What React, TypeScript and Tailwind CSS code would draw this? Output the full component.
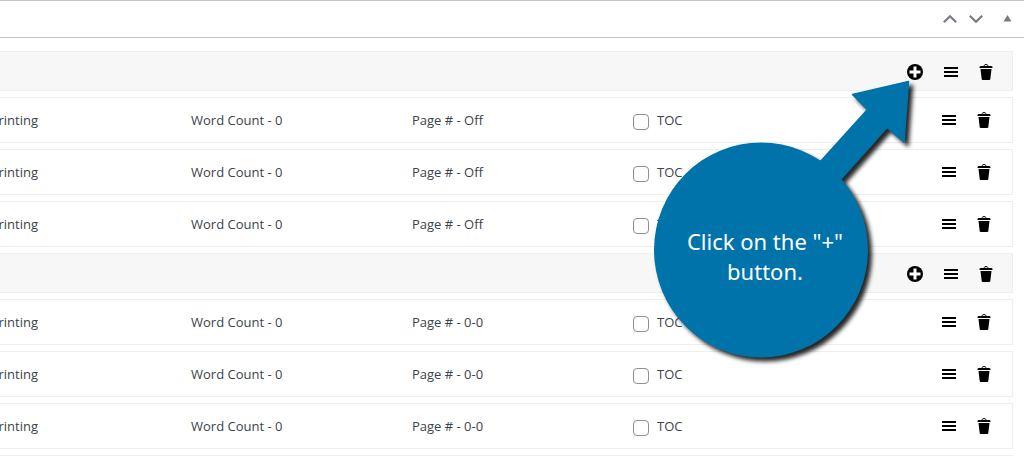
import clsx from "clsx";

type Section = { id: string; page: string };

const sections: Section[] = [
  { id: "front", page: "Page # - Off" },
  { id: "body", page: "Page # - 0-0" },
];

function PlusIcon() {
  return (
    <svg width="16" height="16" viewBox="0 0 16 16" aria-hidden="true">
      <circle cx="8" cy="8" r="8" fill="#000" />
      <path d="M8 2.500v11M2.500 8h11" stroke="#fff" strokeWidth="3" />
    </svg>
  );
}

function MenuIcon() {
  return (
    <svg width="14" height="16" viewBox="0 0 14 16" aria-hidden="true">
      <path d="M0 3h14v2H0zM0 7h14v2H0zM0 11h14v2H0z" />
    </svg>
  );
}

function TrashIcon() {
  return (
    <svg width="14" height="16" viewBox="0 0 14 16" aria-hidden="true">
      <path d="M5 1.800c0-1.700 4-1.700 4 0" fill="none" stroke="#000" strokeWidth="1" />
      <path d="M.5 4V3.200Q.5 2 2 2h10q1.500 0 1.500 1.200V4zM1.500 5h11l-1.200 10q-.1 1-1 1H3.700q-.9 0-1-1z" />
    </svg>
  );
}

function Chevron({ down }: { down?: boolean }) {
  return (
    <svg
      width="14"
      height="10"
      viewBox="0 0 14 10"
      fill="none"
      stroke="#787c82"
      strokeWidth="2.2"
      aria-hidden="true"
      className={clsx(down && "rotate-180")}
    >
      <path d="M.8 8.200 7 2.200l6.200 6" />
    </svg>
  );
}

function Actions({ canAdd }: { canAdd?: boolean }) {
  return (
    <div className={clsx("ml-auto flex items-center", canAdd ? "pt-0.5 pr-[19px]" : "pr-[21px]")}>
      {canAdd && (
        <button type="button" aria-label="Add" className="mr-[21px]">
          <PlusIcon />
        </button>
      )}
      <button type="button" aria-label="Move" className="mr-[21px]">
        <MenuIcon />
      </button>
      <button type="button" aria-label="Delete">
        <TrashIcon />
      </button>
    </div>
  );
}

function Row({ id, page }: { id: string; page: string }) {
  return (
    <li className="flex h-[46px] items-center border border-l-0 border-[#eee] bg-white">
      <div className="w-[191px] shrink-0">
        {/* label runs off the left edge of the panel */}
        <div className="flex w-[38px] justify-end overflow-hidden">Printing</div>
      </div>
      <div className="w-[221px] shrink-0">Word Count - 0</div>
      <div className="w-[221px] shrink-0">{page}</div>
      <div className="flex items-center gap-2">
        <input
          id={id}
          type="checkbox"
          className="mt-[3px] size-4 appearance-none rounded border border-[#8c8f94] bg-white checked:bg-[#3582c4]"
        />
        <label htmlFor={id}>TOC</label>
      </div>
      <Actions />
    </li>
  );
}

function Callout() {
  return (
    <div className="pointer-events-none absolute left-[644px] top-[72px] h-[300px] w-[280px]">
      <svg
        width="280"
        height="300"
        viewBox="644 72 280 300"
        fill="#0073aa"
        aria-hidden="true"
        className="drop-shadow-[4px_4px_2px_rgba(0,0,0,0.85)]"
      >
        <ellipse cx="761" cy="250" rx="107" ry="107.500" />
        <path
          d="M908.500 81.500 852.500 94.500l15 15-48 53 22 16 45.500-51 17 14.500z"
          stroke="#0073aa"
          strokeWidth="1.500"
          strokeLinejoin="round"
        />
      </svg>
      <p className="absolute inset-x-0 top-[154px] pr-[38px] text-center font-['Noto_Sans','Open_Sans',sans-serif] text-[22px] leading-[30px] text-white">
        Click on the "+"
        <br />
        button.
      </p>
    </div>
  );
}

export default function App() {
  return (
    <div className="relative h-screen overflow-hidden bg-white font-['Open_Sans','Noto_Sans',sans-serif] text-[13px] leading-5 text-[#3c434a]">
      <header className="flex h-[38px] items-center justify-end border-y border-[#c3c4c7] pr-3">
        <button type="button" aria-label="Move up">
          <Chevron />
        </button>
        <button type="button" aria-label="Move down" className="ml-3">
          <Chevron down />
        </button>
        <button type="button" aria-label="Toggle panel" className="mb-0.5 ml-5">
          <svg width="9" height="7" viewBox="0 0 9 7" fill="#787c82" aria-hidden="true">
            <path d="M4.500 0 8.500 6.500h-8z" />
          </svg>
        </button>
      </header>

      <main className="flex flex-col gap-1.5 pr-[11px] pt-[13px]">
        {sections.map(({ id, page }) => (
          <section key={id} className="flex flex-col gap-1.5">
            <div className="flex h-10 items-center border border-l-0 border-[#eee] bg-[#f7f7f7]">
              <Actions canAdd />
            </div>
            <ul className="flex flex-col gap-1.5">
              {[1, 2, 3].map((n) => (
                <Row key={n} id={`${id}-toc-${n}`} page={page} />
              ))}
            </ul>
          </section>
        ))}
        <div className="h-10 border border-l-0 border-[#eee] bg-[#f7f7f7]" />
      </main>

      <Callout />
    </div>
  );
}
